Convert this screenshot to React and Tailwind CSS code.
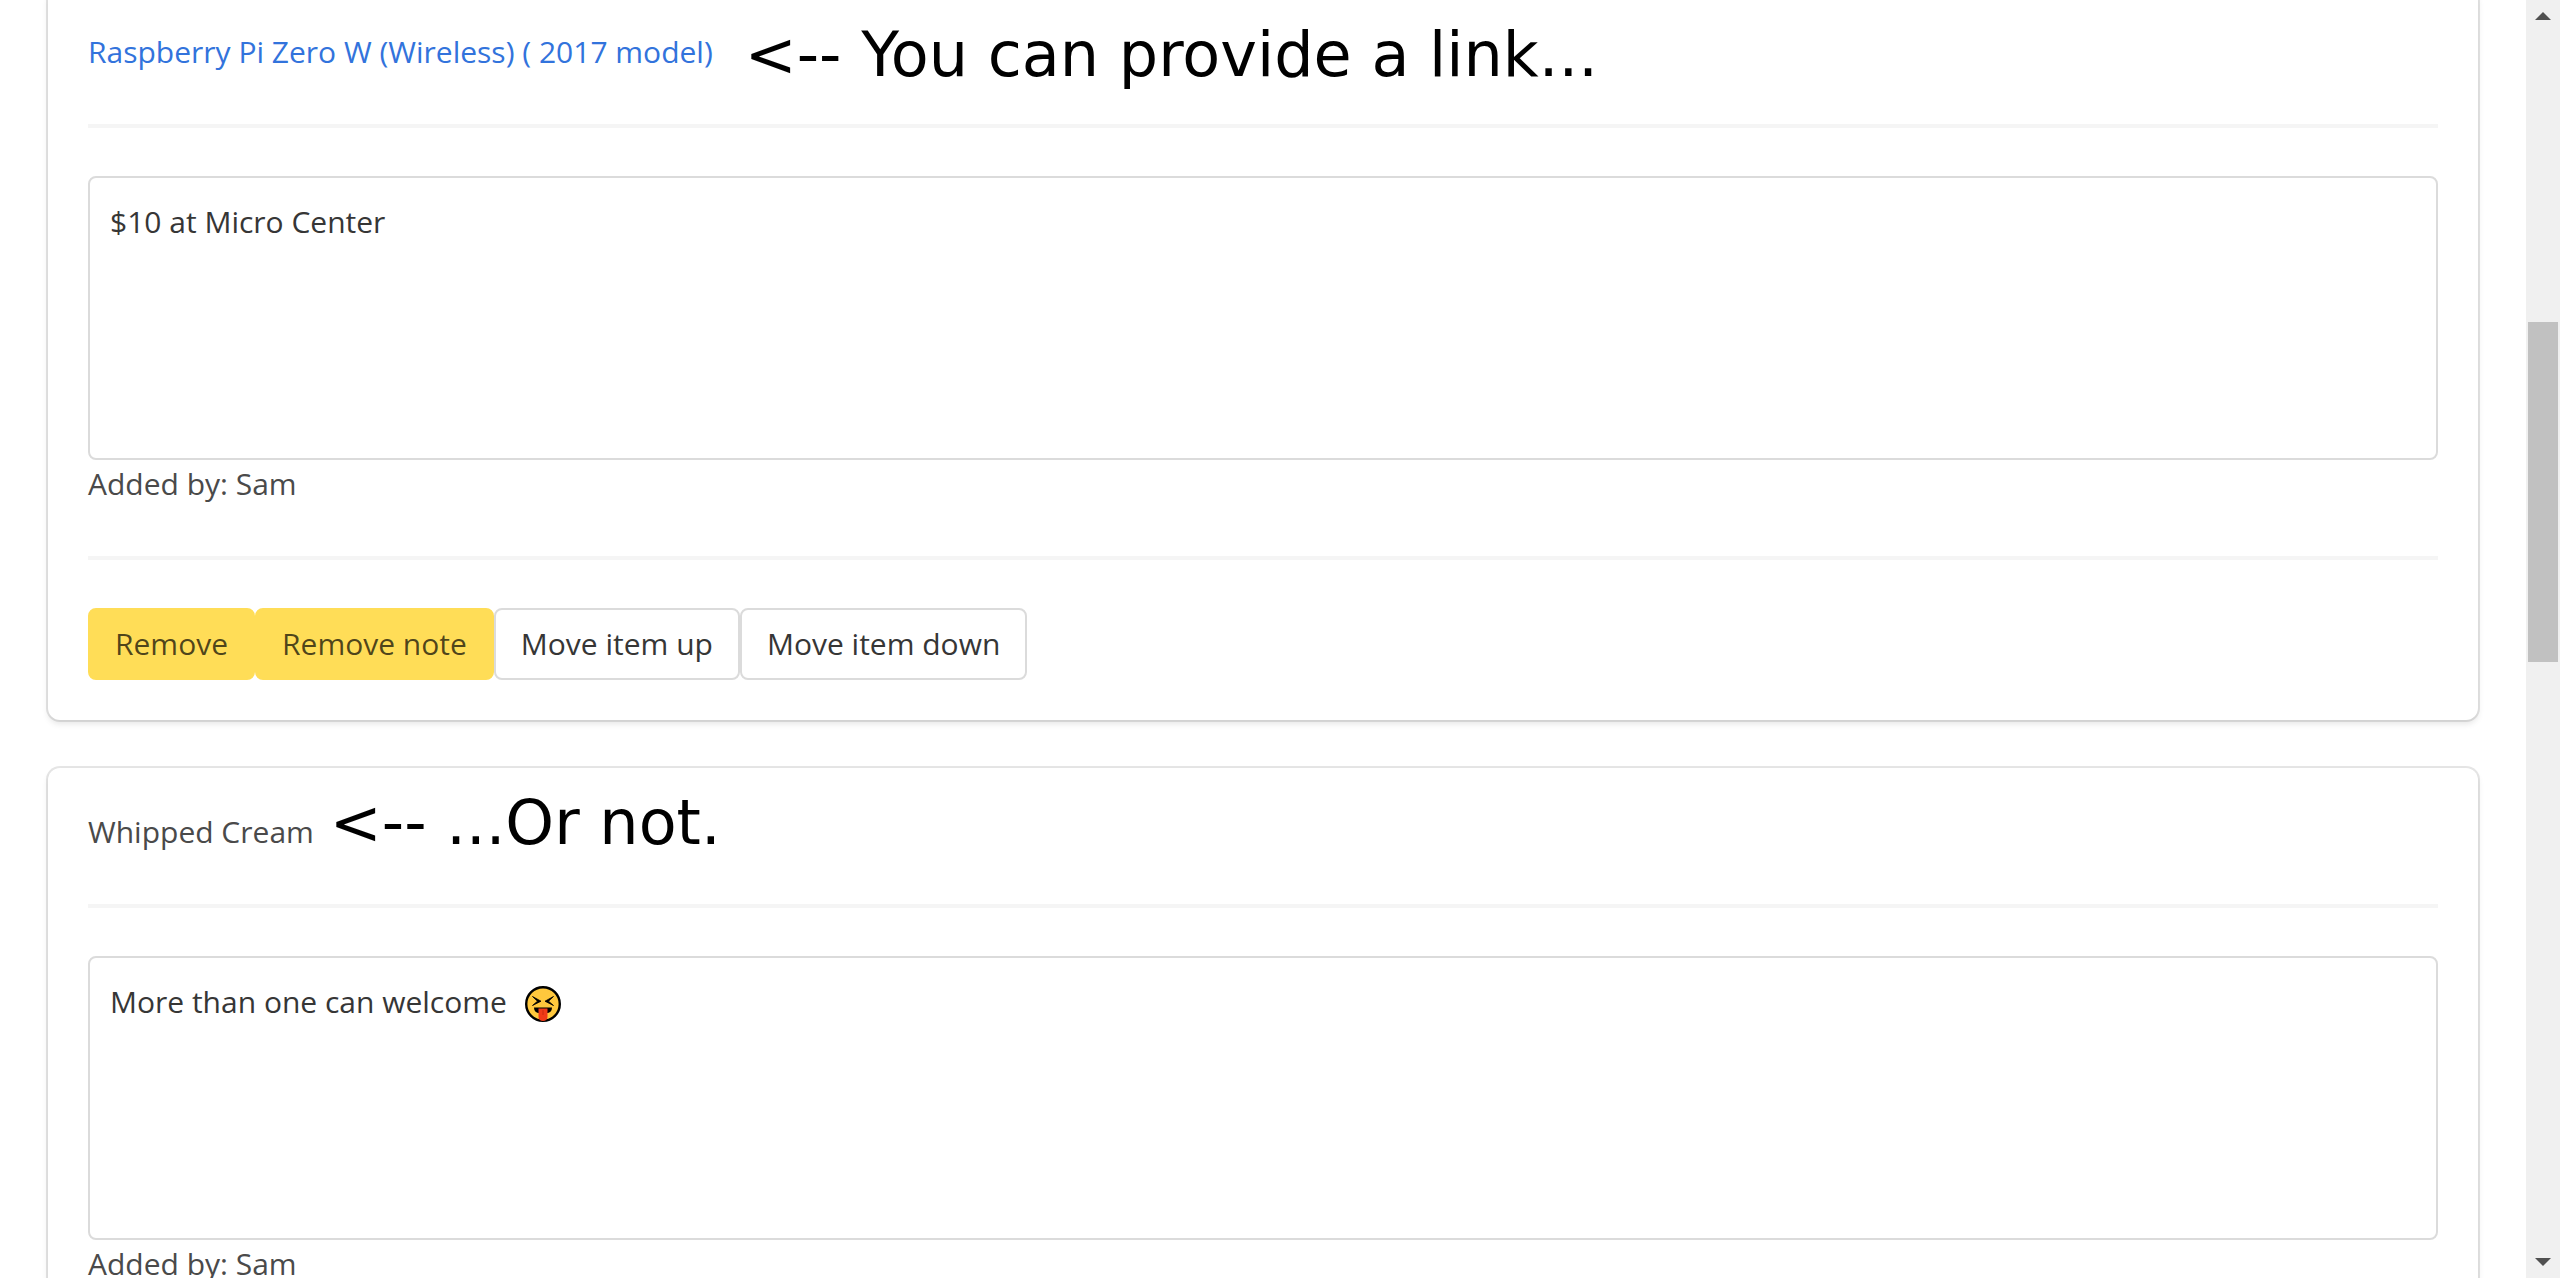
import { useState } from "react";

function TongueFace({ className }) {
  return (
    <svg viewBox="0 0 36 36" className={className} role="img" aria-label="Squinting face with tongue">
      <circle cx="18" cy="18" r="16.8" fill="#ffc83d" stroke="#000" strokeWidth="2.4" />
      <path d="M7.5 10.5 L16 15.2 L7.5 19.5 L12.5 15.2 Z" fill="#000" stroke="#000" strokeWidth="0.8" />
      <path d="M28.5 10.5 L20 15.2 L28.5 19.5 L23.5 15.2 Z" fill="#000" stroke="#000" strokeWidth="0.8" />
      <path d="M9 21.5 H27 C27 24.5 25.5 26.5 23 27 H13 C10.5 26.5 9 24.5 9 21.5 Z" fill="#000" />
      <path d="M13.5 22.5 H22.5 V31 C22.5 33.5 20.5 35 18 35 C15.5 35 13.5 33.5 13.5 31 Z" fill="#f03a17" />
      <path d="M18 24 V29" stroke="#c92a0e" strokeWidth="1" />
    </svg>
  );
}

function Rule() {
  return <hr className="my-12 h-1 border-0 bg-[#f5f5f5]" />;
}

function Button({ warning, children }) {
  return (
    <button
      type="button"
      className={
        warning
          ? "h-[72px] rounded-lg border-2 border-[#ffdd57] bg-[#ffdd57] px-[25px] text-black/70"
          : "h-[72px] rounded-lg border-2 border-[#dbdbdb] bg-white px-[25px] text-[#363636]"
      }
    >
      {children}
    </button>
  );
}

function ItemCard({ title, annotation, note, emoji, author }) {
  const [text, setText] = useState(note);
  return (
    <section className="rounded-xl bg-white p-10 shadow-[0_4px_6px_rgba(10,10,10,0.1),0_0_0_2px_rgba(10,10,10,0.1)]">
      <div className="flex h-12 items-start whitespace-nowrap">
        {title}
        {annotation}
      </div>
      <Rule />
      <div className="relative">
        <textarea
          aria-label="Note"
          rows={5}
          value={text}
          onChange={(e) => setText(e.target.value)}
          className="block w-full resize-none rounded-lg border-2 border-[#dbdbdb] bg-white p-5 text-[#363636] outline-none"
        />
        {emoji}
      </div>
      <p>Added by: {author}</p>
      <Rule />
      <div className="flex">
        <Button warning>Remove</Button>
        <Button warning>Remove note</Button>
        <Button>Move item up</Button>
        <Button>Move item down</Button>
      </div>
    </section>
  );
}

function ScrollBar() {
  return (
    <div className="flex w-[34px] shrink-0 flex-col items-center justify-between bg-[#f0f0f0] py-3" aria-hidden="true">
      <svg viewBox="0 0 16 8" className="h-2 w-4">
        <path d="M8 0 L16 8 H0 Z" fill="#505050" />
      </svg>
      <div className="flex w-full flex-1 flex-col px-0.5">
        <div className="grow-302" />
        <div className="grow-340 bg-[#c1c1c1]" />
        <div className="grow-596" />
      </div>
      <svg viewBox="0 0 16 8" className="h-2 w-4">
        <path d="M0 0 H16 L8 8 Z" fill="#505050" />
      </svg>
    </div>
  );
}

export default function App() {
  return (
    <div className="flex h-screen overflow-hidden bg-white font-['Open_Sans',sans-serif] text-[30px] leading-[48px] text-[#4a4a4a]">
      <main className="-mt-3 flex min-w-0 flex-1 flex-col gap-12 px-12">
        <ItemCard
          title={
            <a href="#raspberry-pi-zero-w" className="text-[#3273dc]">
              Raspberry Pi Zero W (Wireless) ( 2017 model)
            </a>
          }
          annotation={
            <span className="ml-8 font-['DejaVu_Sans',sans-serif] text-[62px] leading-[54px] text-black">
              &lt;-- You can provide a link...
            </span>
          }
          note="$10 at Micro Center"
          author="Sam"
        />
        <ItemCard
          title={<span>Whipped Cream</span>}
          annotation={
            <span className="ml-4 font-['DejaVu_Sans',sans-serif] text-[62px] leading-[30px] text-black">
              &lt;-- ...Or not.
            </span>
          }
          note="More than one can welcome "
          emoji={<TongueFace className="absolute top-[30px] left-[437px] size-9" />}
          author="Sam"
        />
      </main>
      <ScrollBar />
    </div>
  );
}
